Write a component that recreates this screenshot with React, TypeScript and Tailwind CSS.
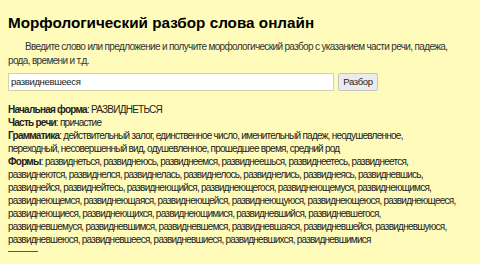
const formLines = [
  "развиднеться, развиднеюсь, развиднеемся, развиднеешься, развиднеетесь, развиднеется,",
  "развиднеются, развиднелся, развиднелась, развиднелось, развиднелись, развиднеясь, развидневшись,",
  "развиднейся, развиднейтесь, развиднеющийся, развиднеющегося, развиднеющемуся, развиднеющимся,",
  "развиднеющемся, развиднеющаяся, развиднеющейся, развиднеющуюся, развиднеющеюся, развиднеющееся,",
  "развиднеющиеся, развиднеющихся, развиднеющимися, развидневшийся, развидневшегося,",
  "развидневшемуся, развидневшимся, развидневшемся, развидневшаяся, развидневшейся, развидневшуюся,",
  "развидневшеюся, развидневшееся, развидневшиеся, развидневшихся, развидневшимися",
];

export default function App() {
  return (
    <div className="w-[480px] h-[264px] overflow-hidden bg-[#fefbbb] px-2 text-[#222] font-['Liberation_Sans',Arial,sans-serif]">
      <h1 className="pt-[13px] text-[15.25px] leading-[19px] font-bold text-black">
        Морфологический разбор слова онлайн
      </h1>
      <p className="mt-[8px] text-[10px] leading-[14px] tracking-[-0.65px] text-[#333] indent-[17px] pr-[10px]">
        Введите слово или предложение и получите морфологический разбор с указанием части речи, падежа, рода, времени и т.д.
      </p>
      <div className="mt-[5px] flex items-center gap-[4px]">
        <div className="w-[326px] h-[18px] bg-white border border-[#d6d3a8] flex items-center px-[2px] text-[9.5px] tracking-[-0.35px] text-[#222]">
          развидневшееся
        </div>
        <button className="h-[18px] w-[40px] bg-[#ececec] border border-[#c4c4c4] rounded-[2px] text-[9.5px] tracking-[-0.3px] text-[#222]">
          Разбор
        </button>
      </div>
      <div className="mt-[12px] text-[10px] leading-[13px] tracking-[-0.75px] text-[#222] whitespace-nowrap">
        <div>
          <b>Начальная форма</b>: РАЗВИДНЕТЬСЯ
        </div>
        <div>
          <b>Часть речи</b>: причастие
        </div>
        <div>
          <b>Грамматика</b>: действительный залог, единственное число, именительный падеж, неодушевленное,
          <br />
          переходный, несовершенный вид, одушевленное, прошедшее время, средний род
        </div>
        <div>
          <b>Формы</b>: {formLines[0]}
          {formLines.slice(1).map((line) => (
            <div key={line}>{line}</div>
          ))}
        </div>
      </div>
      <div className="mt-[5px] w-[30px] h-px bg-[#555]" />
    </div>
  );
}
